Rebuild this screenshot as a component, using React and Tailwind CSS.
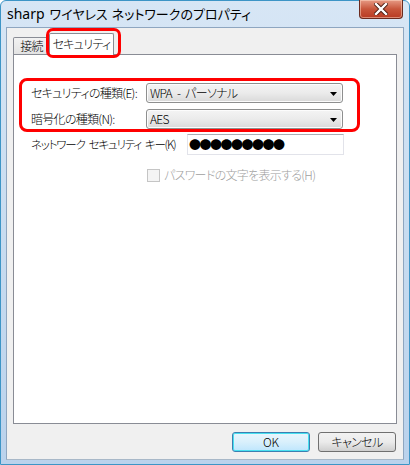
import React from "react";

const jp = "font-['Meiryo_UI','Noto_Sans_CJK_JP',sans-serif] [font-feature-settings:'palt']";

function Combo({ children }) {
  return (
    <div className="relative w-[197px] h-[20px] rounded-[3px] border border-[#8e8f8f] bg-gradient-to-b from-[#f4f4f4] via-[#ebebeb] to-[#d9d9d9] flex items-center pl-[3px] text-[12px] text-black shadow-[inset_0_0_0_1px_#fcfcfc] whitespace-nowrap">
      <span className="leading-none flex items-center">{children}</span>
      <svg className="absolute right-[5px] top-[8px]" width="7" height="4" viewBox="0 0 7 4">
        <path d="M0 0 H7 L3.5 4 Z" fill="#000" />
      </svg>
    </div>
  );
}

export default function App() {
  return (
    <div className={`w-[410px] h-[465px] relative overflow-hidden font-light ${jp}`}>
      {/* frame */}
      <div className="absolute inset-0 rounded-t-[6px] border border-[#3d95c6] bg-gradient-to-b from-[#d7e6f5] via-[#c8dcf0] to-[#bad2ec]" />
      <div className="relative flex flex-col h-full">
        {/* title bar */}
        <div className="h-[27px] flex items-start relative">
          <div className="pl-[7px] pt-[5px] text-[13px] leading-[18px] text-black whitespace-nowrap font-normal">
            <span className="font-['Segoe_UI','Noto_Sans',sans-serif] text-[14px]">sharp</span>
            <span className="ml-[5px]">ワイヤレス</span>
            <span className="ml-[4px]">ネットワークのプロパティ</span>
          </div>
          <div className="absolute right-[7px] top-0 w-[44px] h-[19px] rounded-b-[4px] border border-[#6b2a1e] border-t-0 bg-gradient-to-b from-[#e69a84] via-[#c8563b] to-[#b83a22] flex items-center justify-center shadow-[inset_0_0_0_1px_rgba(255,220,200,0.5)]">
            <svg width="14" height="12" viewBox="0 0 14 12">
              <path d="M2 1 L12 11 M12 1 L2 11" stroke="#4a1b10" strokeWidth="4.2" strokeLinecap="square" />
              <path d="M2 1 L12 11 M12 1 L2 11" stroke="#fff" strokeWidth="2.4" strokeLinecap="square" />
            </svg>
          </div>
        </div>
        {/* client */}
        <div className="mx-[6px] mb-[5px] flex-1 border border-[#8ea6c0] border-b-[#a8b8c8] bg-[#f0f0f0] flex flex-col">
          {/* tabs */}
          <div className="mt-[5px] ml-[6px] mr-[6px] flex items-end h-[21px] relative z-10 text-[12px] tracking-[-0.7px] whitespace-nowrap">
            <div className="h-[17px] w-[37px] flex items-center justify-center border border-[#898c95] border-b-0 bg-gradient-to-b from-[#f2f2f2] to-[#e3e3e3] rounded-t-[2px]">
              接続
            </div>
            <div className="h-[22px] w-[65px] flex items-center justify-center border border-[#898c95] border-b-0 bg-white rounded-t-[2px] -ml-px translate-y-px pb-[2px]">
              セキュリティ
            </div>
          </div>
          {/* panel */}
          <div className="mx-[6px] h-[370px] border border-[#898c95] bg-white flex flex-col text-[12px] text-black tracking-[-0.7px] whitespace-nowrap">
            <div className="flex items-center mt-[28px] pl-[17px]">
              <div className="w-[115px]">セキュリティの種類(E):</div>
              <Combo>
                <span>WPA</span>
                <span className="mx-[5px]">-</span>
                <span>パーソナル</span>
              </Combo>
            </div>
            <div className="flex items-center mt-[6px] pl-[17px]">
              <div className="w-[115px]">暗号化の種類(N):</div>
              <Combo>
                <span>AES</span>
              </Combo>
            </div>
            <div className="flex items-center mt-[5px] pl-[17px]">
              <div className="w-[156px] tracking-[-1.2px] text-[11.5px]">
                <span>ネットワーク</span>
                <span className="ml-[4px]">セキュリティ</span>
                <span className="ml-[4px]">キー(K)</span>
              </div>
              <div className="w-[157px] h-[21px] border border-[#e2e3ea] border-t-[#abadb3] bg-white flex items-center pl-[1px] text-[12px] tracking-[-1.5px] leading-none font-normal">
                ●●●●●●●●●
              </div>
            </div>
            <div className="flex items-center mt-[11px] pl-[133px] text-[#a0a0a0]">
              <div className="w-[13px] h-[13px] border border-[#c5c5c5] bg-[#f4f4f4] mr-[4px]" />
              <span>パスワードの文字を表示する(H)</span>
            </div>
          </div>
          {/* buttons */}
          <div className="flex justify-end gap-[8px] mt-[8px] mr-[7px] text-[12px] whitespace-nowrap">
            <div className="w-[78px] h-[20px] rounded-[3px] border border-[#3c7fb1] bg-gradient-to-b from-[#eaf6fd] via-[#d9f0fc] to-[#bee6fd] flex items-center justify-center shadow-[inset_0_0_0_1px_#48e0f0]">
              OK
            </div>
            <div className="w-[78px] h-[20px] rounded-[3px] border border-[#707070] bg-gradient-to-b from-[#f2f2f2] via-[#ebebeb] to-[#cfcfcf] flex items-center justify-center tracking-[-0.6px]">
              キャンセル
            </div>
          </div>
        </div>
      </div>
      {/* red highlight annotations */}
      <div className="absolute left-[46px] top-[28px] w-[75px] h-[30px] border-[3px] border-[#ff0000] rounded-[7px] z-20" />
      <div className="absolute left-[19px] top-[78px] w-[341px] h-[54px] border-[3px] border-[#ff0000] rounded-[8px] z-20" />
    </div>
  );
}
